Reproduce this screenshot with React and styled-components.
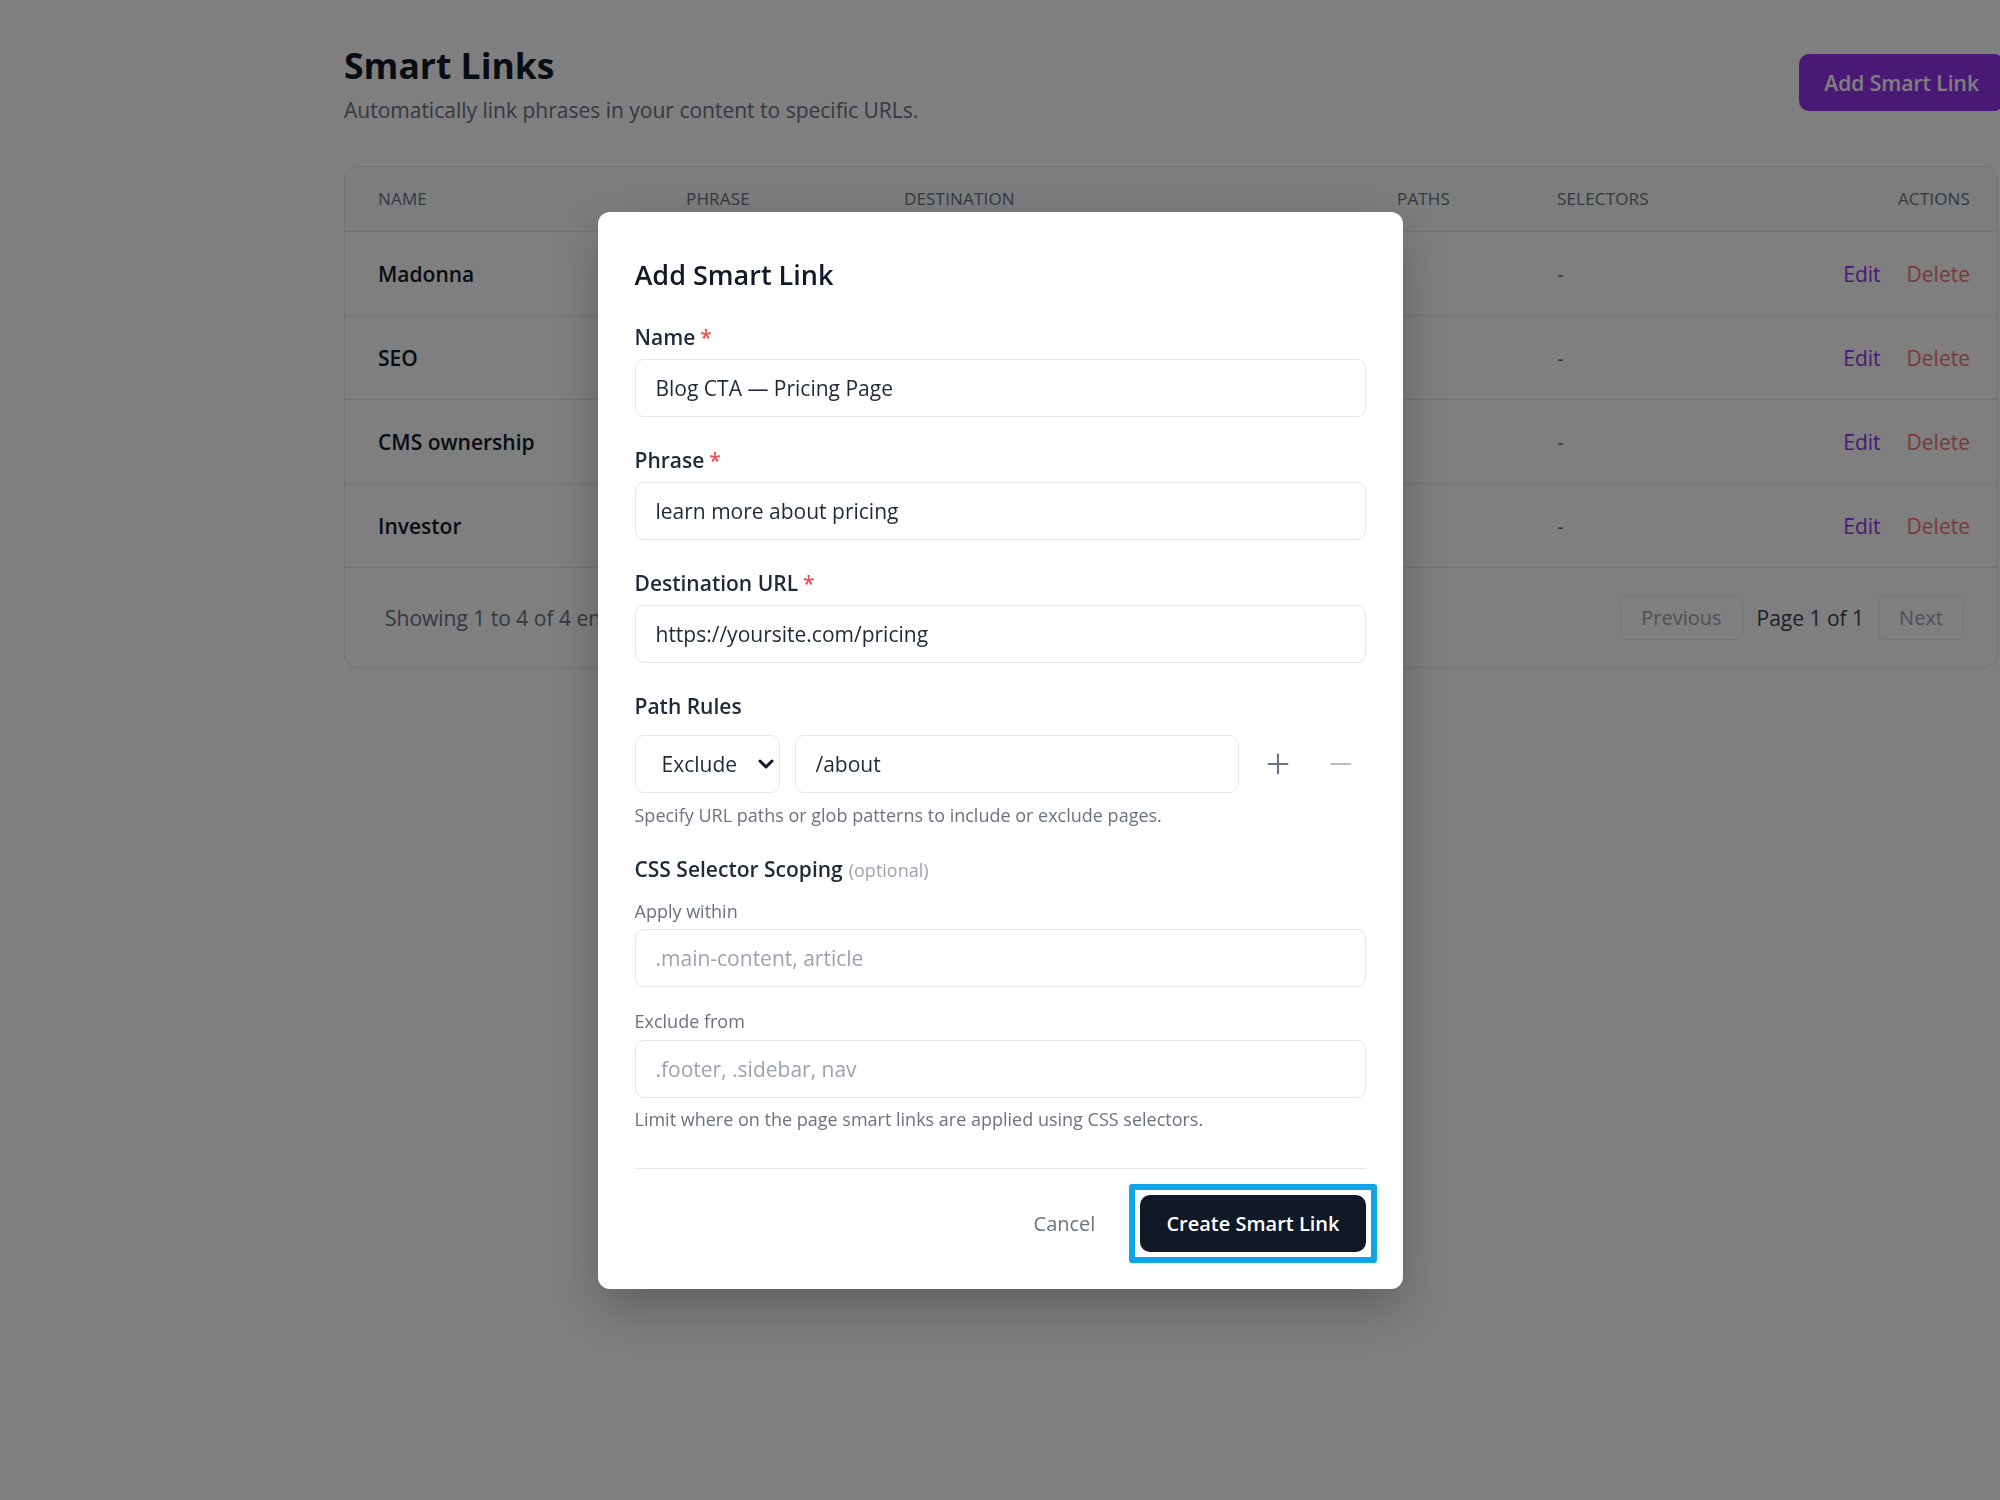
import React from "react";
import styled, { createGlobalStyle } from "styled-components";
import { ChevronDown, Plus, Minus } from "lucide-react";

const FONT = `"Open Sans", "Noto Sans", "Liberation Sans", sans-serif`;

const GlobalStyle = createGlobalStyle`
  html, body {
    margin: 0;
    padding: 0;
    background: #ffffff;
    overflow: hidden;
  }
  body {
    font-family: ${FONT};
    color: #111827;
  }
  * {
    box-sizing: border-box;
  }
`;

const Page = styled.div`
  width: 1998px;
  height: 1500px;
  padding: 41px 0 0 344px;
`;

const HeaderRow = styled.header`
  display: flex;
  justify-content: space-between;
  align-items: flex-start;
`;

const Title = styled.h1`
  margin: 0;
  font-size: 35.5px;
  line-height: 48px;
  font-weight: 700;
  color: #111827;
`;

const Subtitle = styled.p`
  margin: 6px 0 0;
  font-size: 21px;
  line-height: 30px;
  color: #6b7280;
`;

const AddButton = styled.button`
  margin: 13px -6px 0 0;
  height: 57px;
  padding: 0 25px;
  border: none;
  border-radius: 10px;
  background: #9333ea;
  color: #ffffff;
  font: 600 21px ${FONT};
`;

const TableCard = styled.section`
  margin-top: 41px;
  background: #ffffff;
  border: 1px solid #e5e7eb;
  border-radius: 14px;
  overflow: hidden;
`;

const Row = styled.div`
  display: grid;
  grid-template-columns: 308px 218px 493px 160px 1fr auto;
  align-items: center;
  height: ${(p) => (p.$head ? 65 : 84)}px;
  padding: 0 27px 0 33px;
  border-bottom: 1px solid #e5e7eb;
  background: ${(p) => (p.$head ? "#f9fafb" : "#ffffff")};
`;

const HeadCell = styled.div`
  font-size: 17px;
  font-weight: 500;
  letter-spacing: 0.01em;
  text-transform: uppercase;
  color: #6b7280;
  text-align: ${(p) => (p.$right ? "right" : "left")};
  transform: translateY(-1px);
`;

const NameCell = styled.div`
  font-size: 21px;
  font-weight: 600;
  color: #111827;
`;

const Cell = styled.div`
  font-size: 21px;
  color: ${(p) => (p.$muted ? "#6b7280" : "#374151")};
  white-space: nowrap;
  overflow: hidden;
`;

const Actions = styled.div`
  display: flex;
  gap: 26px;
`;

const ActionLink = styled.a`
  font-size: 21px;
  color: ${(p) => (p.$danger ? "#f87171" : "#9333ea")};
  text-decoration: none;
`;

const TableFooter = styled.div`
  display: flex;
  justify-content: space-between;
  align-items: center;
  height: 99px;
  padding: 0 33px 0 40px;
`;

const FooterText = styled.span`
  font-size: 21px;
  color: ${(p) => (p.$strong ? "#374151" : "#6b7280")};
`;

const Pager = styled.div`
  display: flex;
  align-items: center;
  gap: 14px;
`;

const PageButton = styled.button`
  height: 45px;
  padding: 0 20px;
  border: 1px solid #e5e7eb;
  border-radius: 8px;
  background: #ffffff;
  color: #9ca3af;
  font: 400 20px ${FONT};
`;

const Overlay = styled.div`
  position: fixed;
  inset: 0;
  display: flex;
  align-items: center;
  justify-content: center;
  background: rgba(0, 0, 0, 0.5);
`;

const Modal = styled.div`
  width: 805px;
  padding: 45px 37px 37px;
  background: #ffffff;
  border-radius: 12px;
  box-shadow: 0 20px 50px rgba(0, 0, 0, 0.25);
`;

const ModalTitle = styled.h2`
  margin: 0 0 29px;
  font-size: 27px;
  line-height: 36px;
  font-weight: 600;
  color: #111827;
`;

const Field = styled.div`
  margin-bottom: ${(p) => p.$mb || 0}px;
`;

const Label = styled.label`
  display: block;
  margin-bottom: ${(p) => p.$gap || 7}px;
  font-size: 21px;
  line-height: 30px;
  font-weight: 600;
  color: #1f2937;
`;

const Required = styled.span`
  margin-left: 5px;
  color: #f05252;
`;

const Optional = styled.span`
  margin-left: 6px;
  font-size: 18px;
  font-weight: 400;
  color: #9ca3af;
`;

const SubLabel = styled.label`
  display: block;
  margin: ${(p) => p.$mt}px 0 ${(p) => p.$mb}px;
  font-size: 18px;
  line-height: 26px;
  color: #6b7280;
`;

const TextInput = styled.input`
  display: block;
  width: 100%;
  height: 58px;
  padding: 0 20px;
  border: 1px solid #e5e7eb;
  border-radius: 9px;
  background: #ffffff;
  color: #1f2937;
  font: 400 21px ${FONT};
  outline: none;

  &::placeholder {
    color: #9ca3af;
  }
`;

const RuleRow = styled.div`
  display: flex;
  align-items: center;
  gap: 15px;
`;

const SelectWrap = styled.div`
  position: relative;
  width: 145px;
  flex: none;

  svg {
    position: absolute;
    right: 2px;
    top: 17px;
    pointer-events: none;
  }
`;

const Select = styled.select`
  display: block;
  width: 100%;
  height: 58px;
  padding: 0 0 0 26px;
  border: 1px solid #e5e7eb;
  border-radius: 9px;
  background: #ffffff;
  color: #1f2937;
  font: 400 21px ${FONT};
  appearance: none;
  outline: none;
`;

const PathInput = styled(TextInput)`
  width: 444px;
  flex: none;
`;

const IconButton = styled.button`
  display: flex;
  align-items: center;
  justify-content: center;
  width: 48px;
  height: 48px;
  padding: 0;
  border: none;
  background: none;
  color: ${(p) => (p.$disabled ? "#b7bbc2" : "#6b7280")};
`;

const Help = styled.p`
  margin: ${(p) => p.$mt}px 0 0;
  font-size: 18px;
  line-height: 26px;
  color: #6b7280;
`;

const SectionLabel = styled.div`
  margin-top: 26px;
  font-size: 21px;
  line-height: 30px;
  font-weight: 600;
  color: #1f2937;
`;

const ModalFooter = styled.div`
  display: flex;
  justify-content: flex-end;
  align-items: center;
  gap: 27px;
  margin-top: 36px;
  padding-top: 26px;
  border-top: 1px solid #e5e7eb;
`;

const CancelButton = styled.button`
  height: 57px;
  padding: 0 18px;
  border: none;
  background: none;
  color: #6b7280;
  font: 400 20px ${FONT};
`;

const PrimaryButton = styled.button`
  position: relative;
  height: 57px;
  padding: 0 26px;
  border: none;
  border-radius: 10px;
  background: #111827;
  color: #ffffff;
  font: 600 20px ${FONT};

  &::after {
    content: "";
    position: absolute;
    inset: -11px;
    border: 6px solid #0ea5e9;
    border-radius: 3px;
    pointer-events: none;
  }
`;

const links = [
  { name: "Madonna", phrase: "Madonna", url: "https://example.com/madonna" },
  { name: "SEO", phrase: "SEO", url: "https://example.com/seo" },
  { name: "CMS ownership", phrase: "CMS ownership", url: "https://example.com/cms" },
  { name: "Investor", phrase: "investor", url: "https://example.com/investors" },
];

export default function App() {
  return (
    <>
      <GlobalStyle />
      <Page>
        <HeaderRow>
          <div>
            <Title>Smart Links</Title>
            <Subtitle>Automatically link phrases in your content to specific URLs.</Subtitle>
          </div>
          <AddButton>Add Smart Link</AddButton>
        </HeaderRow>

        <TableCard>
          <Row $head>
            <HeadCell>Name</HeadCell>
            <HeadCell>Phrase</HeadCell>
            <HeadCell>Destination</HeadCell>
            <HeadCell>Paths</HeadCell>
            <HeadCell>Selectors</HeadCell>
            <HeadCell $right>Actions</HeadCell>
          </Row>
          {links.map((l) => (
            <Row key={l.name}>
              <NameCell>{l.name}</NameCell>
              <Cell>{l.phrase}</Cell>
              <Cell>{l.url}</Cell>
              <Cell />
              <Cell $muted>-</Cell>
              <Actions>
                <ActionLink href="#">Edit</ActionLink>
                <ActionLink href="#" $danger>Delete</ActionLink>
              </Actions>
            </Row>
          ))}
          <TableFooter>
            <FooterText>Showing 1 to 4 of 4 entries</FooterText>
            <Pager>
              <PageButton disabled>Previous</PageButton>
              <FooterText $strong>Page 1 of 1</FooterText>
              <PageButton disabled>Next</PageButton>
            </Pager>
          </TableFooter>
        </TableCard>
      </Page>

      <Overlay>
        <Modal>
          <ModalTitle>Add Smart Link</ModalTitle>

          <Field $mb={28}>
            <Label>
              Name<Required>*</Required>
            </Label>
            <TextInput defaultValue="Blog CTA — Pricing Page" />
          </Field>

          <Field $mb={28}>
            <Label>
              Phrase<Required>*</Required>
            </Label>
            <TextInput defaultValue="learn more about pricing" />
          </Field>

          <Field $mb={28}>
            <Label>
              Destination URL<Required>*</Required>
            </Label>
            <TextInput defaultValue="https://yoursite.com/pricing" />
          </Field>

          <Field>
            <Label $gap={14}>Path Rules</Label>
            <RuleRow>
              <SelectWrap>
                <Select defaultValue="exclude">
                  <option value="include">Include</option>
                  <option value="exclude">Exclude</option>
                </Select>
                <ChevronDown size={24} strokeWidth={3} color="#111827" />
              </SelectWrap>
              <PathInput defaultValue="/about" />
              <IconButton>
                <Plus size={32} strokeWidth={1.6} />
              </IconButton>
              <IconButton $disabled>
                <Minus size={32} strokeWidth={1.6} />
              </IconButton>
            </RuleRow>
            <Help $mt={9}>Specify URL paths or glob patterns to include or exclude pages.</Help>
          </Field>

          <SectionLabel>
            CSS Selector Scoping<Optional>(optional)</Optional>
          </SectionLabel>
          <SubLabel $mt={13} $mb={5}>Apply within</SubLabel>
          <TextInput placeholder=".main-content, article" />
          <SubLabel $mt={21} $mb={6}>Exclude from</SubLabel>
          <TextInput placeholder=".footer, .sidebar, nav" />
          <Help $mt={8}>Limit where on the page smart links are applied using CSS selectors.</Help>

          <ModalFooter>
            <CancelButton>Cancel</CancelButton>
            <PrimaryButton>Create Smart Link</PrimaryButton>
          </ModalFooter>
        </Modal>
      </Overlay>
    </>
  );
}
